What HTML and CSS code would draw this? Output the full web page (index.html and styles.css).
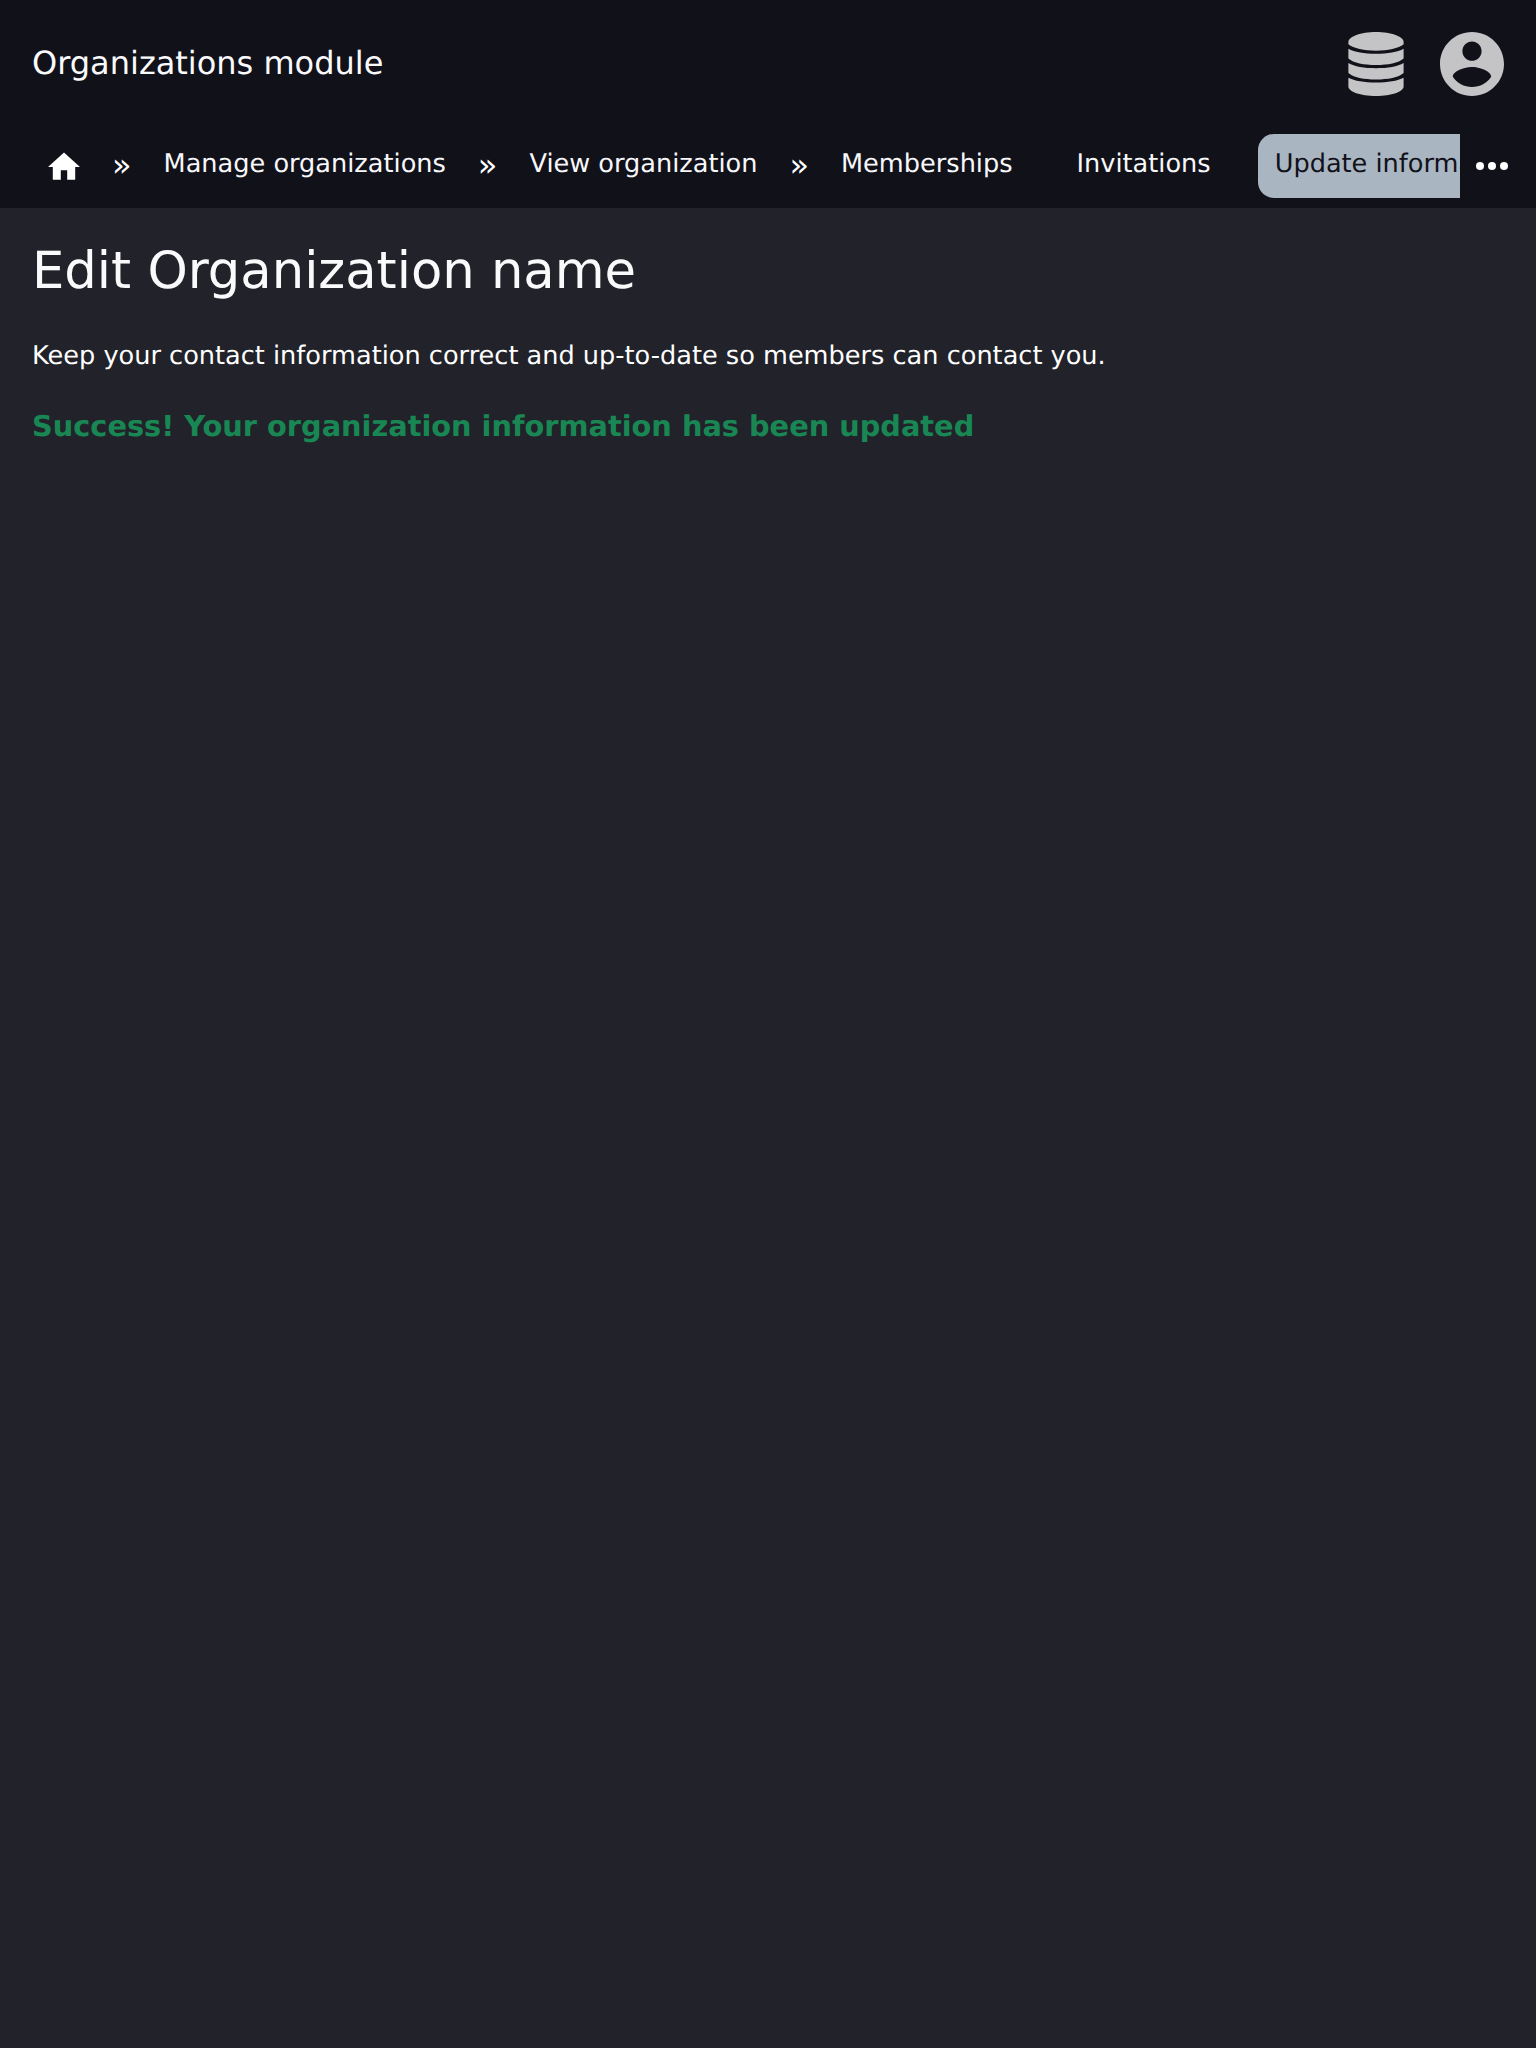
FILE: index.html
```html
<!DOCTYPE html>
<html lang="en">
<head>
<meta charset="utf-8">
<title>Organizations module</title>
<link rel="stylesheet" href="styles.css">
</head>
<body>
<header class="header">
  <div class="topbar">
    <span class="module-name">Organizations module</span>
    <div class="actions">
      <svg class="icon-database" viewBox="-0.4 0 56.800 64" preserveAspectRatio="none" aria-hidden="true">
        <path d="M28 0C43.500 0 56 4.700 56 10V12.300C51 16.500 40 18.700 28 18.700S5 16.500 0 12.300V10C0 4.700 12.500 0 28 0Z"/>
        <path d="M0 16.700C6 20 16 21.800 28 21.800S50 20 56 16.700V26.500C51 31 40 33 28 33S5 31 0 26.500Z"/>
        <path d="M0 31C6 34.500 16 36.200 28 36.200S50 34.500 56 31V41C51 45.500 40 47.500 28 47.500S5 45.500 0 41Z"/>
        <path d="M0 45.700C6 48.800 16 50.500 28 50.500S50 48.800 56 45.700V54.500C56 59.500 44 64 28 64S0 59.500 0 54.500Z"/>
      </svg>
      <svg class="icon-account" viewBox="2 2 20 20" aria-hidden="true">
        <path d="M12 2C6.480 2 2 6.480 2 12s4.480 10 10 10 10-4.480 10-10S17.520 2 12 2zm0 3c1.660 0 3 1.340 3 3s-1.340 3-3 3-3-1.340-3-3 1.340-3 3-3zm0 14.200c-2.500 0-4.710-1.280-6-3.220.03-1.990 4-3.080 6-3.080 1.990 0 5.970 1.090 6 3.080-1.290 1.940-3.500 3.220-6 3.220z"/>
      </svg>
    </div>
  </div>
  <nav class="nav">
    <div class="crumbs">
      <a class="home"><svg class="icon-home" viewBox="2 2 20 20" aria-hidden="true"><path d="M10 20v-6h4v6h5v-8h3L12 3 2 12h3v8z"/></svg></a>
      <span class="separator">»</span>
      <a class="link">Manage organizations</a>
      <span class="separator">»</span>
      <a class="link">View organization</a>
      <span class="separator">»</span>
      <div class="tabs">
        <a class="link">Memberships</a>
        <a class="link">Invitations</a>
        <a class="link link-active">Update information</a>
      </div>
    </div>
    <div class="more"><svg class="icon-more" viewBox="0 0 32 8" aria-hidden="true"><circle cx="4" cy="4" r="4"/><circle cx="16" cy="4" r="4"/><circle cx="28" cy="4" r="4"/></svg></div>
  </nav>
</header>
<main class="content">
  <h1 class="title">Edit Organization name</h1>
  <p class="intro">Keep your contact information correct and up-to-date so members can contact you.</p>
  <p class="success">Success! Your organization information has been updated</p>
</main>
</body>
</html>
```
FILE: styles.css
```css
body {
  margin: 0;
  min-height: 2048px;
  background: #22222a;
  color: #fff;
  font-family: "DejaVu Sans", sans-serif;
  font-size: 25.6px;
  text-rendering: geometricPrecision;
}
.header {
  height: 208px;
  background: #11111a;
}
.topbar {
  display: flex;
  align-items: center;
  justify-content: space-between;
  height: 128px;
  padding: 0 32px;
  box-sizing: border-box;
}
.module-name {
  font-size: 32px;
  line-height: 40px;
  padding-bottom: 2px;
  color: #fafafc;
}
.actions {
  display: flex;
  align-items: center;
  gap: 36px;
}
.icon-database {
  width: 56px;
  height: 64px;
  fill: #c4c4c6;
}
.icon-account {
  width: 64px;
  height: 64px;
  fill: #c4c4c6;
}
.nav {
  display: flex;
  padding: 6px 0 10px 32px;
}
.crumbs {
  display: flex;
  flex: 1;
  min-width: 0;
  overflow: hidden;
}
.home {
  display: flex;
  flex: none;
  align-items: center;
  justify-content: center;
  box-sizing: border-box;
  width: 64px;
  height: 64px;
  padding-top: 2px;
}
.icon-home {
  width: 32px;
  height: 32px;
  fill: #fff;
}
.separator {
  flex: none;
  padding: 0 16px;
  font-size: 32px;
  line-height: 62px;
}
.tabs {
  display: flex;
  gap: 32px;
}
.link {
  flex: none;
  height: 64px;
  padding: 0 16px;
  line-height: 60px;
  border-radius: 16px;
  white-space: nowrap;
  color: #f8f8fa;
}
.link-active {
  margin-left: -0.5px;
  padding-left: 16.5px;
  background: #a9b5c1;
  color: #11111a;
}
.more {
  display: flex;
  flex: none;
  align-items: center;
  width: 60px;
  height: 64px;
  padding-left: 16px;
}
.icon-more {
  width: 32px;
  height: 8px;
  fill: #fff;
}
.content {
  padding: 33px 32px;
}
.title {
  margin: 0;
  font-size: 51.2px;
  font-weight: 400;
  line-height: 60px;
  color: #fafafc;
}
.intro {
  margin: 40px 0 0;
  line-height: 30px;
}
.success {
  margin: 39px 0 0;
  font-size: 28.8px;
  font-weight: 700;
  line-height: 32px;
  color: #198754;
}
```
